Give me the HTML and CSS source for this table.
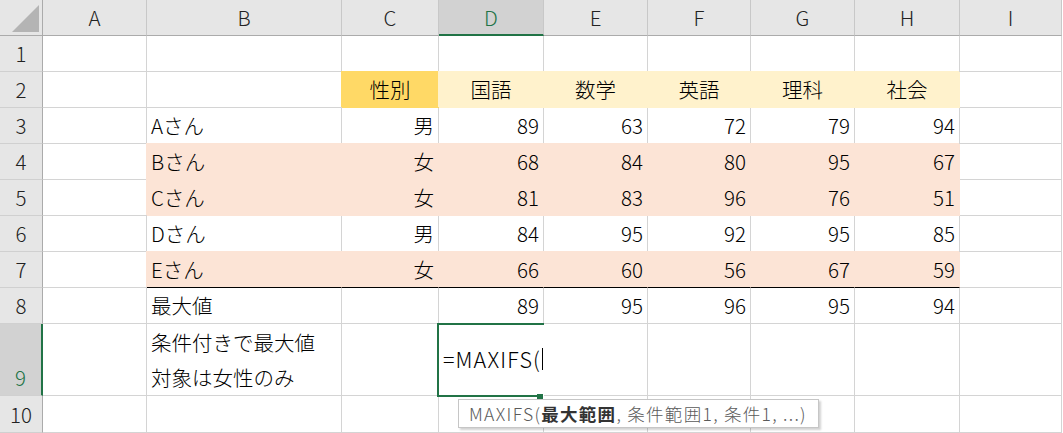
FILE: index.html
```html
<!DOCTYPE html>
<html lang="ja">
<head>
<meta charset="utf-8">
<title>MAXIFS</title>
<link rel="stylesheet" href="styles.css">
</head>
<body>
<div class="sheet">
  <div class="corner"><svg width="42" height="35" viewBox="0 0 42 35"><polygon points="12,32 39,32 39,5" fill="#b4b4b4"/></svg></div>
  <div class="ch">A</div><div class="ch">B</div><div class="ch">C</div><div class="ch sel">D</div><div class="ch">E</div><div class="ch">F</div><div class="ch">G</div><div class="ch">H</div><div class="ch">I</div>

  <div class="rh">1</div><div class="c"></div><div class="c"></div><div class="c"></div><div class="c"></div><div class="c"></div><div class="c"></div><div class="c"></div><div class="c"></div><div class="c"></div>

  <div class="rh">2</div><div class="c"></div><div class="c"></div><div class="c ctr gold">性別</div><div class="c ctr yel">国語</div><div class="c ctr yel">数学</div><div class="c ctr yel">英語</div><div class="c ctr yel">理科</div><div class="c ctr yel">社会</div><div class="c"></div>

  <div class="rh">3</div><div class="c"></div><div class="c">Aさん</div><div class="c r">男</div><div class="c r">89</div><div class="c r">63</div><div class="c r">72</div><div class="c r">79</div><div class="c r">94</div><div class="c"></div>

  <div class="rh">4</div><div class="c"></div><div class="c pk">Bさん</div><div class="c r pk">女</div><div class="c r pk">68</div><div class="c r pk">84</div><div class="c r pk">80</div><div class="c r pk">95</div><div class="c r pk">67</div><div class="c"></div>

  <div class="rh">5</div><div class="c"></div><div class="c pk">Cさん</div><div class="c r pk">女</div><div class="c r pk">81</div><div class="c r pk">83</div><div class="c r pk">96</div><div class="c r pk">76</div><div class="c r pk">51</div><div class="c"></div>

  <div class="rh">6</div><div class="c"></div><div class="c">Dさん</div><div class="c r">男</div><div class="c r">84</div><div class="c r">95</div><div class="c r">92</div><div class="c r">95</div><div class="c r">85</div><div class="c"></div>

  <div class="rh">7</div><div class="c"></div><div class="c pk blk">Eさん</div><div class="c r pk blk">女</div><div class="c r pk blk">66</div><div class="c r pk blk">60</div><div class="c r pk blk">56</div><div class="c r pk blk">67</div><div class="c r pk blk">59</div><div class="c"></div>

  <div class="rh">8</div><div class="c"></div><div class="c">最大値</div><div class="c r"></div><div class="c r">89</div><div class="c r">95</div><div class="c r">96</div><div class="c r">95</div><div class="c r">94</div><div class="c"></div>

  <div class="rh sel">9</div><div class="c"></div><div class="c wrap">条件付きで最大値<br>対象は女性のみ</div><div class="c"></div>
  <div class="c active">
    <div class="selbox"></div>
    <div class="handle"></div>
    <div class="edit">=MAXIFS(<span class="caret"></span></div>
  </div>
  <div class="c"></div><div class="c"></div><div class="c"></div><div class="c"></div><div class="c"></div>

  <div class="rh">10</div><div class="c"></div><div class="c"></div><div class="c"></div><div class="c"></div><div class="c"></div><div class="c"></div><div class="c"></div><div class="c"></div><div class="c"></div>

  <div class="tip">MAXIFS(<b>最大範囲</b>, 条件範囲1, 条件1, ...)</div>
</div>
</body>
</html>
```

FILE: styles.css
```css
html, body {
  margin: 0;
  padding: 0;
  background: #ffffff;
}

.sheet {
  position: relative;
  display: grid;
  grid-template-columns: 43px 104px 195px 97px 105px 104px 103px 104px 105px 102px;
  grid-template-rows: 36px repeat(8, 36px) 72px 37px;
  width: 1063px;
  height: 433px;
  overflow: hidden;
  font-family: "Noto Sans CJK JP", "Noto Sans", sans-serif;
  font-weight: 300;
  font-size: 20.5px;
  color: #000000;
}

.corner {
  background: #e6e6e6;
  border-right: 1px solid #ababab;
  border-bottom: 1px solid #ababab;
  box-sizing: border-box;
}
.corner svg {
  display: block;
}

.ch {
  box-sizing: border-box;
  background: #e6e6e6;
  border-right: 1px solid #c8c8c8;
  border-bottom: 1px solid #ababab;
  display: flex;
  align-items: center;
  justify-content: center;
  color: #222222;
  line-height: 35px;
}
.ch.sel {
  background: #d2d2d2;
  color: #217346;
  border-bottom: 2px solid #217346;
}

.rh {
  box-sizing: border-box;
  background: #e6e6e6;
  border-right: 1px solid #ababab;
  border-bottom: 1px solid #d0d0d0;
  display: flex;
  align-items: flex-end;
  justify-content: center;
  color: #222222;
  line-height: 35px;
}
.rh.sel {
  background: #d2d2d2;
  color: #217346;
  border-right: 2px solid #217346;
}

.c {
  box-sizing: border-box;
  border-right: 1px solid #d4d4d4;
  border-bottom: 1px solid #d4d4d4;
  display: flex;
  align-items: flex-end;
  padding: 0 4px;
  line-height: 35px;
  white-space: nowrap;
}
.c.r {
  justify-content: flex-end;
}
.c.ctr {
  justify-content: center;
}
.c.wrap {
  white-space: normal;
  align-items: flex-end;
}

.gold {
  background: #ffd966;
  border-color: #ffd966;
  box-shadow: -1px -1px 0 0 #ffd966;
}
.yel {
  background: #fff2cc;
  border-color: #fff2cc;
  box-shadow: -1px -1px 0 0 #fff2cc;
}
.pk {
  background: #fce4d6;
  border-color: #fce4d6;
  box-shadow: -1px -1px 0 0 #fce4d6;
}
.c.blk {
  border-bottom-color: #000000;
}

.active {
  position: relative;
  border-right-color: #ffffff;
}
.selbox {
  position: absolute;
  left: -2px;
  top: -1px;
  width: 107px;
  height: 74px;
  box-sizing: border-box;
  border: 2px solid #217346;
  border-right: none;
}
.handle {
  position: absolute;
  left: 98px;
  top: 70px;
  width: 7px;
  height: 7px;
  background: #217346;
  box-sizing: border-box;
  border: 1px solid #ffffff;
  border-top: none;
  border-left: none;
}
.edit {
  position: absolute;
  left: 4px;
  top: 17px;
  line-height: 36px;
  white-space: nowrap;
  display: flex;
  align-items: center;
  font-size: 21.5px;
  letter-spacing: 1.1px;
}
.caret {
  display: inline-block;
  width: 1px;
  height: 22px;
  background: #000000;
  margin-left: 1px;
}

.tip {
  position: absolute;
  left: 458px;
  top: 399px;
  width: 361px;
  height: 29px;
  box-sizing: border-box;
  background: #ffffff;
  border: 1px solid #c6c6c6;
  box-shadow: 2px 2px 2px rgba(0, 0, 0, 0.18);
  font-size: 17.5px;
  line-height: 27px;
  padding-left: 10px;
  color: #5a5a5a;
  white-space: nowrap;
  letter-spacing: 1.3px;
}
.tip b {
  color: #333333;
  font-weight: 700;
}
```
